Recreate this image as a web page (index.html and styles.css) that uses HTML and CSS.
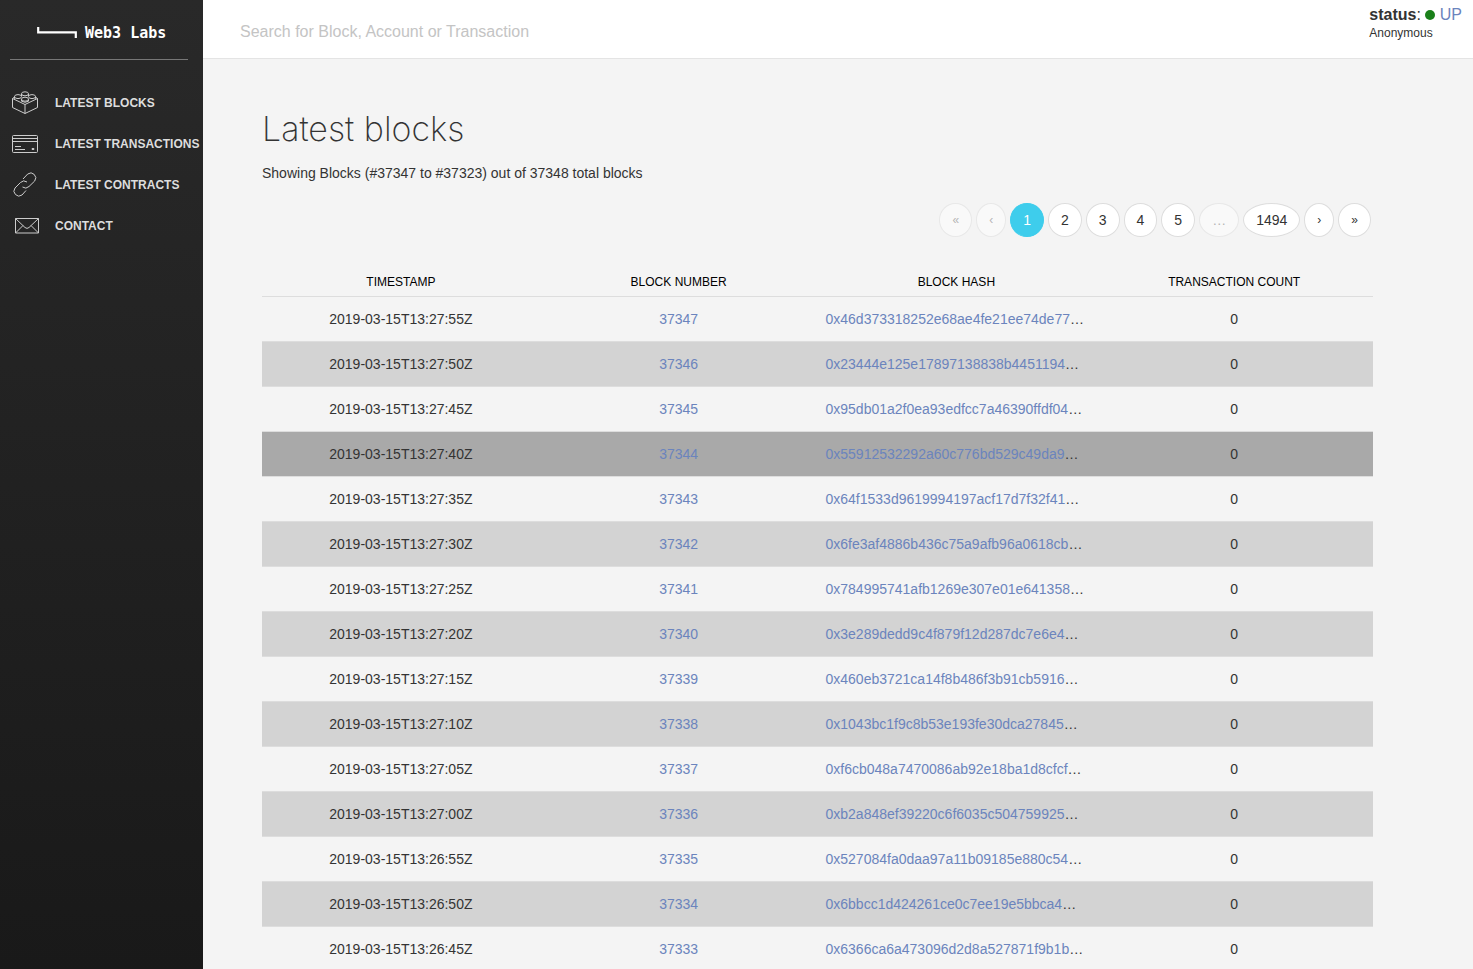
FILE: index.html
```html
<!DOCTYPE html>
<html lang="en">
<head>
<meta charset="utf-8">
<title>Latest blocks</title>
<link rel="stylesheet" href="styles.css">
</head>
<body>
<div class="layout">
  <aside class="sidebar">
    <a class="brand" href="#">
      <svg class="brand-mark" viewBox="0 0 40 12" aria-hidden="true"><path d="M1.200 0V5.300H38.800V11" fill="none" stroke="#fff" stroke-width="2.200"/></svg>
      <span>Web3 Labs</span>
    </a>
    <nav class="menu">
      <a class="menu-item" href="#">
        <svg class="icon" viewBox="0 0 28 24" aria-hidden="true"><path d="M3.500 6L1.500 7.500v9L14 22.500l12.500-6v-9L24.500 6M1.500 7.500L14 13.500l12.500-6M14 13.500v9"/><ellipse cx="14" cy="2.800" rx="3.500" ry="2"/><ellipse cx="7" cy="5.600" rx="3.500" ry="2"/><ellipse cx="21" cy="5.600" rx="3.500" ry="2"/><ellipse cx="14" cy="8.200" rx="3.500" ry="2"/><path d="M10.500 2.800v2.200M17.500 2.800v2.200M3.500 5.600v2.200M24.500 5.600v2.200M10.500 8.200v2q3.500 2.200 7 0v-2"/></svg>
        <span>Latest blocks</span>
      </a>
      <a class="menu-item" href="#">
        <svg class="icon" viewBox="0 0 28 24" aria-hidden="true"><rect x="1.500" y="3.500" width="25" height="17" rx="1"/><path d="M1.500 6.500h25M1.500 9.500h25M4 14.500h6M4 17.500h10"/><ellipse cx="22" cy="17" rx="1.300" ry=".6"/></svg>
        <span>Latest transactions</span>
      </a>
      <a class="menu-item" href="#">
        <svg class="icon" viewBox="0 0 28 24" aria-hidden="true"><path d="M12 6l4.700-5a5 5 0 0 1 7 7L18 13.500a5 5 0 0 1-6.500.5M16 9a5 5 0 0 0-6.500.5L4 15a5 5 0 0 0 7 7l4-4.500"/></svg>
        <span>Latest contracts</span>
      </a>
      <a class="menu-item" href="#">
        <svg class="icon" viewBox="0 0 28 24" aria-hidden="true"><path d="M4.500 4.500h23v14.500h-23zM4.500 4.500l9.500 9q2 1.800 4 0l9.500-9M4.500 19l7.500-7.500M27.500 19L20 11.500"/></svg>
        <span>Contact</span>
      </a>
    </nav>
  </aside>
  <div class="page">
    <header class="topbar">
      <input class="search" type="text" aria-label="Search" placeholder="Search for Block, Account or Transaction">
      <div class="account">
        <div class="status"><b>status</b>: <span class="dot"></span> <a href="#">UP</a></div>
        <div class="user">Anonymous</div>
      </div>
    </header>
    <main class="content">
      <h1>Latest blocks</h1>
      <p class="summary">Showing Blocks (#37347 to #37323) out of 37348 total blocks</p>
      <nav class="pagination" aria-label="Pages">
        <button class="arrow" disabled>«</button><button class="arrow" disabled>‹</button><button class="current">1</button><button>2</button><button>3</button><button>4</button><button>5</button><button disabled>…</button><button>1494</button><button class="arrow">›</button><button class="arrow">»</button>
      </nav>
      <table class="blocks">
        <thead><tr><th>TIMESTAMP</th><th>BLOCK NUMBER</th><th>BLOCK HASH</th><th>TRANSACTION COUNT</th></tr></thead>
        <tbody>
          <tr><td>2019-03-15T13:27:55Z</td><td><a href="#">37347</a></td><td class="hash"><a href="#">0x46d373318252e68ae4fe21ee74de77</a>…</td><td>0</td></tr>
          <tr><td>2019-03-15T13:27:50Z</td><td><a href="#">37346</a></td><td class="hash"><a href="#">0x23444e125e17897138838b4451194</a>…</td><td>0</td></tr>
          <tr><td>2019-03-15T13:27:45Z</td><td><a href="#">37345</a></td><td class="hash"><a href="#">0x95db01a2f0ea93edfcc7a46390ffdf04</a>…</td><td>0</td></tr>
          <tr class="active"><td>2019-03-15T13:27:40Z</td><td><a href="#">37344</a></td><td class="hash"><a href="#">0x55912532292a60c776bd529c49da9</a>…</td><td>0</td></tr>
          <tr><td>2019-03-15T13:27:35Z</td><td><a href="#">37343</a></td><td class="hash"><a href="#">0x64f1533d9619994197acf17d7f32f41</a>…</td><td>0</td></tr>
          <tr><td>2019-03-15T13:27:30Z</td><td><a href="#">37342</a></td><td class="hash"><a href="#">0x6fe3af4886b436c75a9afb96a0618cb</a>…</td><td>0</td></tr>
          <tr><td>2019-03-15T13:27:25Z</td><td><a href="#">37341</a></td><td class="hash"><a href="#">0x784995741afb1269e307e01e641358</a>…</td><td>0</td></tr>
          <tr><td>2019-03-15T13:27:20Z</td><td><a href="#">37340</a></td><td class="hash"><a href="#">0x3e289dedd9c4f879f12d287dc7e6e4</a>…</td><td>0</td></tr>
          <tr><td>2019-03-15T13:27:15Z</td><td><a href="#">37339</a></td><td class="hash"><a href="#">0x460eb3721ca14f8b486f3b91cb5916</a>…</td><td>0</td></tr>
          <tr><td>2019-03-15T13:27:10Z</td><td><a href="#">37338</a></td><td class="hash"><a href="#">0x1043bc1f9c8b53e193fe30dca27845</a>…</td><td>0</td></tr>
          <tr><td>2019-03-15T13:27:05Z</td><td><a href="#">37337</a></td><td class="hash"><a href="#">0xf6cb048a7470086ab92e18ba1d8cfcf</a>…</td><td>0</td></tr>
          <tr><td>2019-03-15T13:27:00Z</td><td><a href="#">37336</a></td><td class="hash"><a href="#">0xb2a848ef39220c6f6035c504759925</a>…</td><td>0</td></tr>
          <tr><td>2019-03-15T13:26:55Z</td><td><a href="#">37335</a></td><td class="hash"><a href="#">0x527084fa0daa97a11b09185e880c54</a>…</td><td>0</td></tr>
          <tr><td>2019-03-15T13:26:50Z</td><td><a href="#">37334</a></td><td class="hash"><a href="#">0x6bbcc1d424261ce0c7ee19e5bbca4</a>…</td><td>0</td></tr>
          <tr><td>2019-03-15T13:26:45Z</td><td><a href="#">37333</a></td><td class="hash"><a href="#">0x6366ca6a473096d2d8a527871f9b1b</a>…</td><td>0</td></tr>
        </tbody>
      </table>
    </main>
  </div>
</div>
</body>
</html>
```
FILE: styles.css
```css
* { box-sizing: border-box; }
body {
  margin: 0;
  font: 14px/20px "Liberation Sans", Arial, sans-serif;
  color: #333;
  background: #f4f4f4;
}
a { color: #6b84bd; text-decoration: none; }
.layout { display: flex; height: 100vh; overflow: hidden; }

.sidebar {
  flex: 0 0 203px;
  background: linear-gradient(#292929, #191919);
}
.brand {
  display: flex;
  align-items: center;
  gap: 8px;
  height: 60px;
  margin: 0 15px 0 10px;
  padding: 7px 0 0 27px;
  border-bottom: 1px solid #777;
  color: #fff;
  font: bold 15px/20px "DejaVu Sans Mono", monospace;
  white-space: nowrap;
}
.brand-mark { width: 40px; height: 12px; }
.menu { padding-top: 22px; }
.menu-item {
  display: flex;
  align-items: center;
  gap: 16px;
  height: 41px;
  padding-left: 11px;
  color: #ddd;
  font-size: 12px;
  font-weight: bold;
  text-transform: uppercase;
  white-space: nowrap;
}
.icon {
  flex: none;
  width: 28px;
  height: 24px;
  fill: none;
  stroke: #ccc;
  stroke-width: 1;
  overflow: visible;
}

.page { flex: 1; min-width: 0; }
.topbar {
  display: flex;
  justify-content: space-between;
  height: 59px;
  padding: 5px 11px 0 37px;
  background: #fff;
  border-bottom: 1px solid #e4e4e4;
}
.search {
  flex: 1;
  padding: 0;
  border: 0;
  outline: 0;
  background: none;
  color: #333;
  font: 16px/20px "Liberation Sans", Arial, sans-serif;
}
.search::placeholder { color: #c4c4c4; }
.status { font-size: 16px; }
.user { font-size: 12px; line-height: 16px; }
.dot {
  display: inline-block;
  width: 10px;
  height: 10px;
  border-radius: 50%;
  background: #1a801a;
}

.content { padding: 50px 100px 0 59px; }
h1 {
  margin: 0;
  font: 200 34px/40px Inter, sans-serif;
}
.summary { margin: 14px 0 20px; }
.pagination {
  display: flex;
  justify-content: flex-end;
  gap: 4px;
  padding-right: 2px;
}
.pagination button {
  height: 34px;
  padding: 0 12px;
  border: 1px solid #ddd;
  border-radius: 50%;
  background: #fff;
  color: #333;
  font: 14px/20px "Liberation Sans", Arial, sans-serif;
}
.pagination .arrow { font-size: 12px; }
.pagination button:disabled { opacity: .5; color: #777; }
.pagination .current { background: #3ecdec; border-color: #3ecdec; color: #fff; }

.blocks {
  width: 100%;
  margin-top: 30px;
  border-collapse: collapse;
  table-layout: fixed;
  text-align: center;
}
.blocks th {
  padding: 5px 8px 4px;
  border-bottom: 1px solid #ddd;
  color: #000;
  font-size: 12px;
  font-weight: normal;
}
.blocks td { padding: 12px 8px; border-bottom: 1px solid #ddd; }
.blocks .hash { text-align: left; white-space: nowrap; overflow: hidden; }
.blocks tbody tr:nth-child(even) { background: #d3d3d3; }
.blocks tbody .active:nth-child(even) { background: #a9a9a9; }
```
